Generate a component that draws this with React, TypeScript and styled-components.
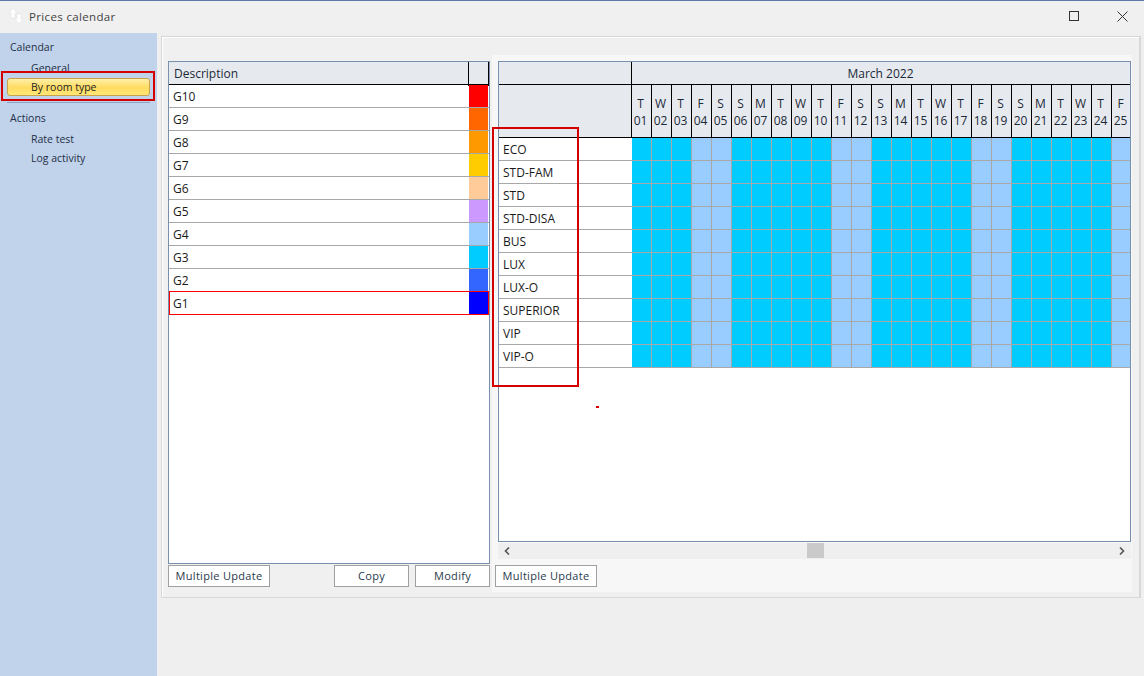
import React from 'react';
import styled, { createGlobalStyle } from 'styled-components';

const GlobalStyle = createGlobalStyle`
  html, body { margin: 0; padding: 0; background: #efefef; }
  body { font-family: "Open Sans", "Noto Sans", "Liberation Sans", sans-serif; font-size: 12px; color: #1c2a3a; }
`;

const Window = styled.div`
  position: relative;
  width: 1144px;
  height: 676px;
  overflow: hidden;
  display: flex;
  flex-direction: column;
  background: #efefef;
  border-top: 1px solid #5b7aa6;
  box-sizing: border-box;
`;

const TitleBar = styled.div`
  height: 32px;
  flex: none;
  display: flex;
  align-items: center;
  box-sizing: border-box;
  background: #f0f0f0;
  padding: 0 1px 2px 9px;
  gap: 6px;
`;

const TitleText = styled.div`
  flex: 1;
  font-size: 11.5px;
  letter-spacing: 0.35px;
  color: #444;
`;

const WinButton = styled.div`
  width: 42px;
  height: 30px;
  display: flex;
  align-items: center;
  justify-content: center;
`;

const Body = styled.div`
  flex: 1;
  display: flex;
  min-height: 0;
`;

const Sidebar = styled.div`
  width: 157px;
  flex: none;
  background: #c1d3ea;
  display: flex;
  flex-direction: column;
  padding: 5px 7px 0;
  box-sizing: border-box;
`;

const GroupTitle = styled.div`
  height: 18px;
  line-height: 18px;
  padding-left: 3px;
  margin-bottom: 4px;
  font-size: 10.5px;
  color: #1f3048;
`;

const NavItem = styled.div<{ $selected?: boolean }>`
  height: 19px;
  line-height: 17px;
  padding-left: 24px;
  font-size: 10.5px;
  color: #1f3048;
  box-sizing: border-box;
  ${p => p.$selected && `
    height: 18px;
    margin-top: -1px;
    border: 1px solid #c9a24b;
    border-radius: 3px;
    padding-left: 23px;
    line-height: 16px;
    color: #222;
    background: linear-gradient(#fff0a8, #ffdc60 55%, #ffe878);
  `}
`;

const NavSeparator = styled.div`
  height: 1px;
  background: #8aa3c6;
  margin: 6px 0 6px;
`;

const Main = styled.div`
  flex: 1;
  min-width: 0;
  padding: 3px 3px 0 4px;
`;

const Panel = styled.div`
  height: 562px;
  border: 1px solid #d8d8d8;
  border-right-width: 2px;
  box-sizing: border-box;
  background: #f0f0f0;
  box-shadow: inset 1px 1px 0 #fff;
  display: flex;
  padding: 18px 7px 5px 3px;
  gap: 2px;
`;

const LeftPane = styled.div`
  width: 325px;
  flex: none;
  padding: 6px 0 0 3px;
  box-sizing: border-box;
  display: flex;
  flex-direction: column;
`;

const RightPane = styled.div`
  flex: 1;
  min-width: 0;
  background: #f7f7f7;
  padding: 6px 0 0 3px;
  display: flex;
  flex-direction: column;
`;

const TableBox = styled.div<{ $height: number }>`
  height: ${p => p.$height}px;
  flex: none;
  background: #fff;
  border: 1px solid #7890ad;
  box-sizing: border-box;
  overflow: hidden;
`;

const DescHeader = styled.div`
  display: grid;
  grid-template-columns: 300px 20px;
  height: 23px;
  background: #e6e9ed;
  border-bottom: 1px solid #000;
  box-sizing: border-box;
`;

const HeaderLabel = styled.div`
  padding-left: 5px;
  line-height: 24px;
  font-size: 12px;
  color: #1c2a3a;
  border-right: 1px solid #000;
`;

const HeaderSwatch = styled.div`
  border-right: 1px solid #000;
`;

const DescRow = styled.div<{ $marked?: boolean }>`
  display: grid;
  grid-template-columns: 300px 19px;
  grid-template-rows: 22px;
  height: 23px;
  box-sizing: border-box;
  border-bottom: 1px solid #a8a8a8;
  ${p => p.$marked && `
    position: relative;
    grid-template-columns: 299px 19px;
    margin-top: -1px;
    height: 24px;
    border: 1px solid #f00;
  `}
`;

const DescLabel = styled.div`
  padding-left: 4px;
  line-height: 24px;
  font-size: 12px;
  color: #1a1a1a;
`;

const MarkedLabel = styled(DescLabel)`
  padding-left: 3px;
`;

const Swatch = styled.div<{ $color: string }>`
  background: ${p => p.$color};
`;

const ButtonRow = styled.div`
  display: flex;
  align-items: center;
  gap: 6px;
  height: 22px;
  margin-top: 1px;
  flex: none;
`;

const RightButtonRow = styled(ButtonRow)`
  margin-top: 6px;
`;

const PushButton = styled.div<{ $width: number }>`
  width: ${p => p.$width}px;
  height: 22px;
  box-sizing: border-box;
  border: 1px solid #a0a0a0;
  background: #fff;
  text-align: center;
  line-height: 20px;
  font-size: 11px;
  letter-spacing: 0.3px;
  color: #2a3a4c;
`;

const Spacer = styled.div`
  flex: 1;
`;

const CalendarWrap = styled.div`
  padding-left: 3px;
  flex: none;
`;

const CalendarBox = styled(TableBox)`
  width: 633px;
`;

const CalGrid = styled.div`
  display: grid;
  grid-template-columns: 133px repeat(25, 20px);
  grid-template-rows: 23px 53px;
  grid-auto-rows: 23px;
`;

const CornerTop = styled.div`
  background: #e6e9ed;
  border-bottom: 1px solid #000;
  border-right: 1px solid #000;
`;

const MonthCell = styled.div`
  grid-column: 2 / span 25;
  background: #e6e9ed;
  border-bottom: 1px solid #000;
  text-align: center;
  line-height: 24px;
  font-size: 12px;
  padding-right: 3px;
  color: #1c2a3a;
`;

const CornerBottom = styled.div`
  background: #e6e9ed;
  border-bottom: 1px solid #000;
  border-right: 1px solid #000;
  box-sizing: border-box;
`;

const DayCell = styled.div`
  box-sizing: border-box;
  background: #e6e9ed;
  border-bottom: 1px solid #000;
  border-right: 1px solid #000;
  display: flex;
  flex-direction: column;
  align-items: center;
  padding: 10px 2px 0 0;
  line-height: 17px;
  font-size: 12px;
  white-space: nowrap;
  color: #1c2a3a;
`;

const RoomCell = styled.div`
  padding-left: 4px;
  line-height: 24px;
  font-size: 12px;
  color: #1a1a1a;
  border-bottom: 1px solid #a8a8a8;
`;

const PriceCell = styled.div<{ $color: string }>`
  background: ${p => p.$color};
  border-bottom: 1px solid #a8a8a8;
  border-right: 1px solid #a8a8a8;
`;

const ScrollBar = styled.div`
  margin: 1px 0 0 3px;
  height: 16px;
  width: 633px;
  flex: none;
  background: #efefef;
  position: relative;
  display: flex;
  align-items: center;
  justify-content: space-between;
  padding: 0 6px;
  box-sizing: border-box;
`;

const ScrollThumb = styled.div`
  position: absolute;
  left: 309px;
  top: 0;
  width: 17px;
  height: 15px;
  background: #cacaca;
`;

// red annotations drawn on top of the screenshot
const Marker = styled.div<{ $x: number; $y: number; $w: number; $h: number }>`
  position: absolute;
  left: ${p => p.$x}px;
  top: ${p => p.$y}px;
  width: ${p => p.$w}px;
  height: ${p => p.$h}px;
  box-sizing: border-box;
  border: 2px solid #d40000;
  pointer-events: none;
`;

const Dot = styled.div`
  position: absolute;
  left: 596px;
  top: 405px;
  width: 3px;
  height: 2px;
  background: #d40000;
`;

const colors: [string, string][] = [
  ['G10', '#ff0000'],
  ['G9', '#ff6600'],
  ['G8', '#ff9900'],
  ['G7', '#ffcc00'],
  ['G6', '#ffcc99'],
  ['G5', '#cc99ff'],
  ['G4', '#99ccff'],
  ['G3', '#00ccff'],
  ['G2', '#3366ff'],
  ['G1', '#0000ff'],
];

const rooms = ['ECO', 'STD-FAM', 'STD', 'STD-DISA', 'BUS', 'LUX', 'LUX-O', 'SUPERIOR', 'VIP', 'VIP-O'];

const letters = ['T', 'W', 'T', 'F', 'S', 'S', 'M'];
const days = Array.from({ length: 25 }, (_, i) => ({
  letter: letters[i % 7],
  num: String(i + 1).padStart(2, '0'),
  light: i % 7 === 3 || i % 7 === 4,
}));

const Arrows = () => (
  <svg width="14" height="18" viewBox="0 0 14 18">
    <path d="M4 1 L8 6 H6 V11 H2 V6 H0 Z" fill="#fff" stroke="#e2e2e2" strokeWidth="0.6" />
    <path d="M10 17 L14 12 H12 V7 H8 V12 H6 Z" fill="#fff" stroke="#e2e2e2" strokeWidth="0.6" />
  </svg>
);

export default function App() {
  return (
    <Window>
      <GlobalStyle />
      <TitleBar>
        <Arrows />
        <TitleText>Prices calendar</TitleText>
        <WinButton>
          <svg width="11" height="11" viewBox="0 0 11 11">
            <rect x="0.5" y="0.5" width="9" height="9" fill="none" stroke="#333" />
          </svg>
        </WinButton>
        <WinButton>
          <svg width="11" height="11" viewBox="0 0 11 11">
            <path d="M0.5 0.5 L10.5 10.5 M10.5 0.5 L0.5 10.5" stroke="#333" fill="none" />
          </svg>
        </WinButton>
      </TitleBar>
      <Body>
        <Sidebar>
          <GroupTitle>Calendar</GroupTitle>
          <NavItem>General</NavItem>
          <NavItem $selected>By room type</NavItem>
          <NavSeparator />
          <GroupTitle>Actions</GroupTitle>
          <NavItem>Rate test</NavItem>
          <NavItem>Log activity</NavItem>
        </Sidebar>
        <Main>
          <Panel>
            <LeftPane>
              <TableBox $height={503}>
                <DescHeader>
                  <HeaderLabel>Description</HeaderLabel>
                  <HeaderSwatch />
                </DescHeader>
                {colors.map(([name, color]) => {
                  const marked = name === 'G1';
                  const Label = marked ? MarkedLabel : DescLabel;
                  return (
                    <DescRow key={name} $marked={marked}>
                      <Label>{name}</Label>
                      <Swatch $color={color} />
                    </DescRow>
                  );
                })}
              </TableBox>
              <ButtonRow>
                <PushButton $width={102}>Multiple Update</PushButton>
                <Spacer />
                <PushButton $width={75}>Copy</PushButton>
                <PushButton $width={75}>Modify</PushButton>
              </ButtonRow>
            </LeftPane>
            <RightPane>
              <CalendarWrap>
                <CalendarBox $height={481}>
                  <CalGrid>
                    <CornerTop />
                    <MonthCell>March 2022</MonthCell>
                    <CornerBottom />
                    {days.map(d => (
                      <DayCell key={d.num}>
                        <span>{d.letter}</span>
                        <span>{d.num}</span>
                      </DayCell>
                    ))}
                    {rooms.map(room => (
                      <React.Fragment key={room}>
                        <RoomCell>{room}</RoomCell>
                        {days.map(d => (
                          <PriceCell key={d.num} $color={d.light ? '#99ccff' : '#00ccff'} />
                        ))}
                      </React.Fragment>
                    ))}
                  </CalGrid>
                </CalendarBox>
              </CalendarWrap>
              <ScrollBar>
                <svg width="6" height="8" viewBox="0 0 6 8">
                  <path d="M5 0.5 L1.5 4 L5 7.5" fill="none" stroke="#555" strokeWidth="1.6" />
                </svg>
                <ScrollThumb />
                <svg width="6" height="8" viewBox="0 0 6 8">
                  <path d="M1 0.5 L4.5 4 L1 7.5" fill="none" stroke="#555" strokeWidth="1.6" />
                </svg>
              </ScrollBar>
              <RightButtonRow>
                <PushButton $width={102}>Multiple Update</PushButton>
              </RightButtonRow>
            </RightPane>
          </Panel>
        </Main>
      </Body>
      <Marker $x={1} $y={70} $w={154} $h={30} />
      <Marker $x={492} $y={126} $w={87} $h={260} />
      <Dot />
    </Window>
  );
}
